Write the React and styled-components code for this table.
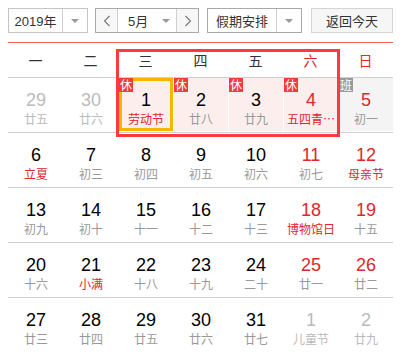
import React from "react";
import styled, { createGlobalStyle } from "styled-components";

const GlobalStyle = createGlobalStyle`
  body {
    margin: 0;
    background: #fff;
    font-family: "Liberation Sans", "Noto Sans CJK SC", sans-serif;
  }
`;

const Container = styled.div`
  width: 385px;
  padding: 8px;
`;

const Toolbar = styled.div`
  display: flex;
  align-items: center;
  height: 25px;
`;

const Select = styled.div`
  display: flex;
  height: 25px;
  box-sizing: border-box;
  width: ${(p) => p.w}px;
  margin-left: ${(p) => p.ml || 0}px;
  border: 1px solid ${(p) => p.border || "#c4c4c4"};
  background: #fff;
  font-family: "Liberation Sans", "Noto Sans CJK SC", sans-serif;
  font-size: 13px;
  color: #333;
`;

const SelectText = styled.div`
  flex: 1;
  display: flex;
  align-items: center;
  justify-content: center;
  border-right: ${(p) => (p.divider ? "1px solid #d0d0d0" : "none")};
`;

const Caret = styled.div`
  width: ${(p) => p.w || 24}px;
  display: flex;
  align-items: center;
  justify-content: center;
  &::after {
    content: "";
    border-left: 4px solid transparent;
    border-right: 4px solid transparent;
    border-top: 4px solid #999;
  }
`;

const Arrow = styled.div`
  width: 21px;
  display: flex;
  align-items: center;
  justify-content: center;
  background: #f7f7f7;
  border-left: ${(p) => (p.side === "right" ? "1px solid #d0d0d0" : "none")};
  border-right: ${(p) => (p.side === "left" ? "1px solid #d0d0d0" : "none")};
`;

const MonthText = styled.div`
  flex: 1;
  display: flex;
  align-items: center;
  padding-left: 10px;
  gap: 14px;
  &::after {
    content: "";
    border-left: 4px solid transparent;
    border-right: 4px solid transparent;
    border-top: 4px solid #999;
  }
`;

const TodayButton = styled.div`
  margin-left: auto;
  width: 82px;
  height: 25px;
  box-sizing: border-box;
  border: 1px solid #d4d4d4;
  background: #f6f6f6;
  display: flex;
  align-items: center;
  justify-content: center;
  font-size: 13px;
  color: #333;
`;

const Month = styled.div`
  position: relative;
  margin-top: 9px;
`;

const WeekHeader = styled.div`
  display: grid;
  grid-template-columns: repeat(7, 55px);
  height: 34px;
  border-top: 1px solid #f0605c;
`;

const WeekDay = styled.div`
  display: flex;
  align-items: center;
  justify-content: center;
  font-family: "Noto Sans CJK SC", sans-serif;
  font-size: 14px;
  color: ${(p) => (p.red ? "#e0262a" : "#333")};
`;

const Row = styled.div`
  display: grid;
  grid-template-columns: repeat(7, 55px);
  border-top: 1px solid #cfcfcf;
  padding-bottom: 1px;
`;

const bgFor = { rest: "#fdeeee", work: "#f4f4f4" };

const Day = styled.div`
  position: relative;
  margin-left: 1px;
  height: 53px;
  box-sizing: border-box;
  display: flex;
  flex-direction: column;
  align-items: center;
  padding-top: ${(p) => (p.today ? 8 : 11)}px;
  background: ${(p) => bgFor[p.kind] || "transparent"};
  border: ${(p) => (p.today ? "3px solid #f7b500" : "none")};
`;

const Num = styled.div`
  font-family: "Liberation Sans", sans-serif;
  font-size: 18px;
  line-height: 22px;
  color: ${(p) => (p.muted ? "#bbb" : p.red ? "#e0262a" : "#000")};
`;

const Lunar = styled.div`
  font-family: "Noto Sans CJK SC", sans-serif;
  font-size: 12px;
  line-height: 16px;
  white-space: nowrap;
  color: ${(p) => (p.muted ? "#bbb" : p.red ? "#e0262a" : "#999")};
`;

const Badge = styled.div`
  position: absolute;
  top: ${(p) => (p.inset ? -3 : 0)}px;
  left: ${(p) => (p.inset ? -3 : 0)}px;
  width: 14px;
  height: 14px;
  font-family: "Noto Sans CJK SC", sans-serif;
  font-size: 12px;
  line-height: 14px;
  text-align: center;
  color: #fff;
  background: ${(p) => (p.work ? "#9a9a9a" : "#f43b3b")};
`;

const Highlight = styled.div`
  position: absolute;
  top: 7px;
  left: 108px;
  width: 224px;
  height: 88px;
  box-sizing: border-box;
  border: 3px solid #fb3a3f;
  pointer-events: none;
`;

const Chevron = ({ dir }) => (
  <svg width="8" height="12" viewBox="0 0 8 12">
    <path
      d={dir === "left" ? "M6.5 1 L1.5 6 L6.5 11" : "M1.5 1 L6.5 6 L1.5 11"}
      fill="none"
      stroke="#777"
      strokeWidth="1.1"
    />
  </svg>
);

const weekdays = ["一", "二", "三", "四", "五", "六", "日"];

// [day, lunar, flags]  m = other month, r = red number, f = festival, b = badge
const weeks = [
  [
    [29, "廿五", { m: true }],
    [30, "廿六", { m: true }],
    [1, "劳动节", { f: true, kind: "rest", b: "休", today: true }],
    [2, "廿八", { kind: "rest", b: "休" }],
    [3, "廿九", { kind: "rest", b: "休" }],
    [4, "五四青…", { r: true, f: true, kind: "rest", b: "休" }],
    [5, "初一", { r: true, kind: "work", b: "班" }],
  ],
  [
    [6, "立夏", { f: true }],
    [7, "初三", {}],
    [8, "初四", {}],
    [9, "初五", {}],
    [10, "初六", {}],
    [11, "初七", { r: true }],
    [12, "母亲节", { r: true, f: true }],
  ],
  [
    [13, "初九", {}],
    [14, "初十", {}],
    [15, "十一", {}],
    [16, "十二", {}],
    [17, "十三", {}],
    [18, "博物馆日", { r: true, f: true }],
    [19, "十五", { r: true }],
  ],
  [
    [20, "十六", {}],
    [21, "小满", { f: true }],
    [22, "十八", {}],
    [23, "十九", {}],
    [24, "二十", {}],
    [25, "廿一", { r: true }],
    [26, "廿二", { r: true }],
  ],
  [
    [27, "廿三", {}],
    [28, "廿四", {}],
    [29, "廿五", {}],
    [30, "廿六", {}],
    [31, "廿七", {}],
    [1, "儿童节", { m: true }],
    [2, "廿九", { m: true }],
  ],
];

const App = () => {
  return (
    <Container>
      <GlobalStyle />
      <Toolbar>
        <Select w={80}>
          <SelectText divider>2019年</SelectText>
          <Caret />
        </Select>
        <Select w={104} ml={7} border="#a9a9a9">
          <Arrow side="left">
            <Chevron dir="left" />
          </Arrow>
          <MonthText>5月</MonthText>
          <Arrow side="right">
            <Chevron dir="right" />
          </Arrow>
        </Select>
        <Select w={95} ml={8} border="#a9a9a9">
          <SelectText divider>假期安排</SelectText>
          <Caret w={24} />
        </Select>
        <TodayButton>返回今天</TodayButton>
      </Toolbar>

      <Month>
        <WeekHeader>
          {weekdays.map((d, i) => (
            <WeekDay key={d} red={i >= 5}>
              {d}
            </WeekDay>
          ))}
        </WeekHeader>
        {weeks.map((week, wi) => (
          <Row key={wi}>
            {week.map(([n, lunar, o], di) => (
              <Day key={di} kind={o.kind} today={o.today}>
                {o.b && (
                  <Badge work={o.b === "班"} inset={o.today}>
                    {o.b}
                  </Badge>
                )}
                <Num muted={o.m} red={o.r}>
                  {n}
                </Num>
                <Lunar muted={o.m} red={o.f && !o.m}>
                  {lunar}
                </Lunar>
              </Day>
            ))}
          </Row>
        ))}
        <Highlight />
      </Month>
    </Container>
  );
};

export default App;
